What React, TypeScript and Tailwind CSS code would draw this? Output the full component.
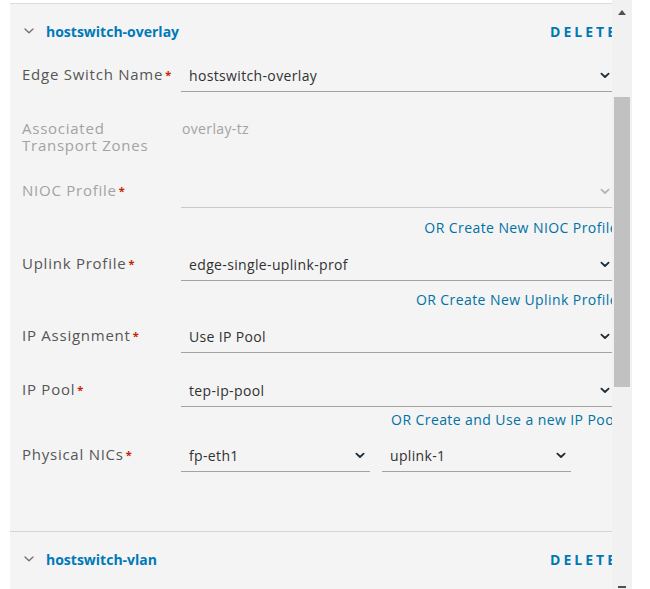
import React from 'react';

const font = { fontFamily: '"Open Sans", "Liberation Sans", sans-serif' };

function Chevron({ color = '#1d2b36' }: { color?: string }) {
  return (
    <svg width="10" height="7" viewBox="0 0 10 7" fill="none">
      <path d="M1.4 1.6 L5 5 L8.6 1.6" stroke={color} strokeWidth="1.8" strokeLinecap="round" strokeLinejoin="round" />
    </svg>
  );
}

function SectionHeader({ title }: { title: string }) {
  return (
    <div className="flex h-[52px] items-center justify-between pl-3 pt-[2px]">
      <div className="flex items-center">
        <svg className="ml-[2px] mr-[12px]" width="10" height="6" viewBox="0 0 10 6" fill="none">
          <path d="M1 1 L5 4.8 L9 1" stroke="#7d7468" strokeWidth="1.4" strokeLinecap="round" />
        </svg>
        <span className="text-[14px] font-bold text-[#0079b8]">{title}</span>
      </div>
      <span className="text-[14px] font-bold tracking-[3px] text-[#0079b8]">DELETE</span>
    </div>
  );
}

function Label({ text, disabled }: { text: string; disabled?: boolean }) {
  return (
    <div className={`text-[15px] leading-[17px] tracking-[0.05em] ${disabled ? 'text-[#a3a3a3]' : 'text-[#565656]'}`}>
      {text}
      <span className="ml-[2px] align-top text-[11px] font-bold text-[#c92100]">*</span>
    </div>
  );
}

function Select({
  value,
  disabled,
  className = 'w-full',
  chevronPad = 'pr-2',
}: {
  value?: string;
  disabled?: boolean;
  className?: string;
  chevronPad?: string;
}) {
  return (
    <div
      className={`flex h-[36px] items-center justify-between border-b pt-1 ${
        disabled ? 'border-[#c9c9c9]' : 'border-[#a3a3a3]'
      } pl-2 ${chevronPad} ${className}`}
    >
      <span className="text-[14px] tracking-[0.025em] text-[#313131]">{value}</span>
      <Chevron color={disabled ? '#b5b5b5' : '#1d2b36'} />
    </div>
  );
}

function FieldRow({
  label,
  disabled,
  children,
  className = '',
}: {
  label: string;
  disabled?: boolean;
  children: React.ReactNode;
  className?: string;
}) {
  return (
    <div className={`grid grid-cols-[159px_1fr] items-center ${className}`}>
      <Label text={label} disabled={disabled} />
      {children}
    </div>
  );
}

function LinkRow({ text, className = '' }: { text: string; className?: string }) {
  return (
    <div className={`grid grid-cols-[159px_1fr] ${className}`}>
      <div />
      <div className="text-right text-[14px] leading-[17px] tracking-[0.03em] text-[#0072a3]">{text}</div>
    </div>
  );
}

function Scrollbar() {
  return (
    <div className="flex h-[589px] w-[20px] flex-col items-center bg-[#f1f1f1]">
      <svg className="mt-[10px]" width="8" height="5" viewBox="0 0 8 5">
        <path d="M0 5 L4 0 L8 5 Z" fill="#505050" />
      </svg>
      <div className="mt-[82px] h-[290px] w-[16px] bg-[#c1c1c1]" />
      <div className="mt-auto mb-[1px] h-[2px] w-[8px] bg-[#505050]" />
    </div>
  );
}

export default function App() {
  return (
    <div className="flex h-[589px] w-[650px] overflow-hidden bg-white" style={font}>
      <div className="w-[10px]" />
      <div className="h-[589px] w-[602px] overflow-hidden pt-[3px]">
        <div className="h-[600px] w-[608px] border-t border-[#dcdcdc] bg-[#f4f4f4]">
          <div className="border-b border-[#d4d4d4] pb-[59px]">
            <SectionHeader title="hostswitch-overlay" />
            <div className="pl-3">
              <FieldRow label="Edge Switch Name">
                <Select value="hostswitch-overlay" />
              </FieldRow>

              <div className="mt-[28px] grid grid-cols-[159px_1fr]">
                <div className="text-[15px] leading-[17px] tracking-[0.05em] text-[#a3a3a3]">
                  <div>Associated</div>
                  <div>Transport Zones</div>
                </div>
                <div className="pl-[1px] text-[14px] leading-[17px] tracking-[0.025em] text-[#a3a3a3]">overlay-tz</div>
              </div>

              <FieldRow label="NIOC Profile" disabled className="mt-[18px]">
                <Select disabled />
              </FieldRow>
              <LinkRow text="OR Create New NIOC Profile" className="mt-[11px]" />

              <FieldRow label="Uplink Profile" className="mt-[9px]">
                <Select value="edge-single-uplink-prof" />
              </FieldRow>
              <LinkRow text="OR Create New Uplink Profile" className="mt-[10px]" />

              <FieldRow label="IP Assignment" className="mt-[9px]">
                <Select value="Use IP Pool" />
              </FieldRow>

              <FieldRow label="IP Pool" className="mt-[18px]">
                <Select value="tep-ip-pool" />
              </FieldRow>
              <LinkRow text="OR Create and Use a new IP Pool" className="mt-[4px]" />

              <FieldRow label="Physical NICs" className="mt-[8px]">
                <div className="flex gap-3">
                  <Select value="fp-eth1" className="w-[189px]" chevronPad="pr-[5px]" />
                  <Select value="uplink-1" className="w-[189px]" chevronPad="pr-[5px]" />
                </div>
              </FieldRow>
            </div>
          </div>
          <SectionHeader title="hostswitch-vlan" />
        </div>
      </div>
      <Scrollbar />
    </div>
  );
}
